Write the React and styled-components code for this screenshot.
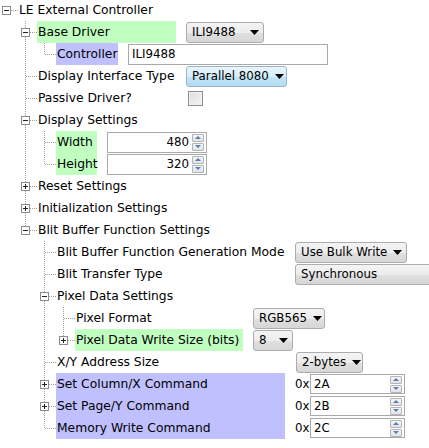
import React from 'react';
import styled, { createGlobalStyle } from 'styled-components';

const GREEN = '#c0ffc0';
const PURPLE = '#c0c0ff';

const GlobalStyle = createGlobalStyle`
  html, body {
    margin: 0;
    padding: 0;
    background: #fff;
  }
  body {
    font-family: "DejaVu Sans", Verdana, sans-serif;
    font-size: 12.3px;
    color: #000;
    overflow: hidden;
  }
`;

const Tree = styled.div`
  display: flex;
  flex-direction: column;
  width: 429px;
  height: 448px;
  margin-top: -1px;
  overflow: hidden;
`;

const Row = styled.div`
  display: flex;
  align-items: center;
  height: 22px;
  white-space: nowrap;
`;

const GuideSvg = styled.svg`
  flex: none;
  display: block;
  stroke: #a0a0a0;
  stroke-dasharray: 1 1;
  shape-rendering: crispEdges;
`;

const Label = styled.span`
  flex: none;
  box-sizing: border-box;
  width: ${p => (p.$w ? `${p.$w}px` : 'auto')};
  height: 22px;
  line-height: 22px;
  margin-left: -1px;
  padding: 0 1px;
  background: ${p => p.$bg || 'transparent'};
`;

const Value = styled.div`
  display: flex;
  align-items: center;
  font-size: 11.8px;
  margin-left: ${p => p.$gap || 10}px;
`;

const SelectBox = styled.div`
  flex: none;
  display: flex;
  align-items: center;
  justify-content: space-between;
  gap: 6px;
  box-sizing: border-box;
  width: ${p => p.$w}px;
  height: 21px;
  padding: 0 4px 0 5px;
  border: 1px solid ${p => (p.$hot ? '#9bb4c8' : '#acacac')};
  border-radius: 3px;
  overflow: hidden;
  background: ${p =>
    p.$hot
      ? 'linear-gradient(#e8f5fc, #d6eefb 50%, #c2e4f7 51%, #b2dcf3)'
      : 'linear-gradient(#f4f4f4, #ececec 50%, #e0e0e0 51%, #d6d6d6)'};

  svg {
    flex: none;
  }
`;

const Field = styled.div`
  flex: none;
  display: flex;
  align-items: center;
  box-sizing: border-box;
  width: ${p => p.$w}px;
  height: ${p => p.$h || 21}px;
  padding: 0 2px 0 3px;
  border: 1px solid #a9a9a9;
  background: #fff;
`;

const FieldText = styled.span`
  flex: 1;
  text-align: ${p => (p.$right ? 'right' : 'left')};
  padding-right: ${p => (p.$right ? 3 : 0)}px;
`;

const Spin = styled.div`
  flex: none;
  display: flex;
  flex-direction: column;
  gap: 1px;
`;

const SpinBtn = styled.div`
  display: flex;
  align-items: center;
  justify-content: center;
  box-sizing: border-box;
  width: 12px;
  height: 8px;
  border: 1px solid #b4b4b4;
  border-radius: 1px;
  background: linear-gradient(#f4f6f8, #dde3ea);
`;

const Check = styled.div`
  box-sizing: border-box;
  width: 15px;
  height: 15px;
  margin-left: 2px;
  border: 1px solid #8e8f8f;
  background: linear-gradient(135deg, #dcdcdc, #f6f6f6);
  box-shadow: inset 0 0 0 1px #f0f0f0;
`;

const Prefix = styled.span`
  flex: none;
  width: 15px;
`;

const Arrow = () => (
  <svg width="9" height="5" viewBox="0 0 9 5">
    <polygon points="0,0 9,0 4.5,5" fill="#000" />
  </svg>
);

const SpinButtons = () => (
  <Spin>
    <SpinBtn>
      <svg width="6" height="3" viewBox="0 0 6 3">
        <polygon points="0,3 6,3 3,0" fill="#5a7db5" />
      </svg>
    </SpinBtn>
    <SpinBtn>
      <svg width="6" height="3" viewBox="0 0 6 3">
        <polygon points="0,0 6,0 3,3" fill="#5a7db5" />
      </svg>
    </SpinBtn>
  </Spin>
);

const Control = ({ c }) => {
  if (c.type === 'select') {
    return (
      <SelectBox $w={c.w} $hot={c.hot}>
        <span>{c.value}</span>
        {c.arrow !== false && <Arrow />}
      </SelectBox>
    );
  }
  if (c.type === 'text') {
    return (
      <Field $w={c.w}>
        <FieldText>{c.value}</FieldText>
      </Field>
    );
  }
  if (c.type === 'number') {
    return (
      <Field $w={c.w}>
        <FieldText $right>{c.value}</FieldText>
        <SpinButtons />
      </Field>
    );
  }
  if (c.type === 'hex') {
    return (
      <>
        <Prefix>0x</Prefix>
        <Field $w={c.w} $h={20}>
          <FieldText>{c.value}</FieldText>
          <SpinButtons />
        </Field>
      </>
    );
  }
  if (c.type === 'check') return <Check />;
  return null;
};

const tree = {
  label: 'LE External Controller',
  open: true,
  children: [
    {
      label: 'Base Driver', bg: GREEN, col: 139, open: true,
      control: { type: 'select', value: 'ILI9488', w: 78 },
      children: [
        { label: 'Controller', bg: PURPLE, col: 62, control: { type: 'text', value: 'ILI9488', w: 200 } },
      ],
    },
    { label: 'Display Interface Type', col: 139, control: { type: 'select', value: 'Parallel 8080', w: 101, hot: true } },
    { label: 'Passive Driver?', col: 139, control: { type: 'check' } },
    {
      label: 'Display Settings', open: true,
      children: [
        { label: 'Width', bg: GREEN, col: 41, control: { type: 'number', value: '480', w: 100 } },
        { label: 'Height', bg: GREEN, col: 41, control: { type: 'number', value: '320', w: 100 } },
      ],
    },
    { label: 'Reset Settings', closed: true },
    { label: 'Initialization Settings', closed: true },
    {
      label: 'Blit Buffer Function Settings', open: true,
      children: [
        { label: 'Blit Buffer Function Generation Mode', col: 229, control: { type: 'select', value: 'Use Bulk Write', w: 112 } },
        { label: 'Blit Transfer Type', col: 229, control: { type: 'select', value: 'Synchronous', w: 150, arrow: false } },
        {
          label: 'Pixel Data Settings', open: true,
          children: [
            { label: 'Pixel Format', col: 168, control: { type: 'select', value: 'RGB565', w: 72 } },
            { label: 'Pixel Data Write Size (bits)', bg: GREEN, col: 168, closed: true, control: { type: 'select', value: '8', w: 40 } },
          ],
        },
        { label: 'X/Y Address Size', col: 229, gap: 11, control: { type: 'select', value: '2-bytes', w: 67 } },
        { label: 'Set Column/X Command', bg: PURPLE, col: 229, closed: true, control: { type: 'hex', value: '2A', w: 95 } },
        { label: 'Set Page/Y Command', bg: PURPLE, col: 229, closed: true, control: { type: 'hex', value: '2B', w: 95 } },
        { label: 'Memory Write Command', bg: PURPLE, col: 229, control: { type: 'hex', value: '2C', w: 95 } },
      ],
    },
  ],
};

const flatten = (node, level = 0, pipes = [], isLast = true, out = []) => {
  out.push({ ...node, level, pipes, isLast });
  if (node.open && node.children) {
    node.children.forEach((child, i) => {
      flatten(child, level + 1, [...pipes, !isLast], i === node.children.length - 1, out);
    });
  }
  return out;
};

const Pipe = () => (
  <GuideSvg width="19" height="22">
    <line x1="6.5" y1="0" x2="6.5" y2="22" />
  </GuideSvg>
);

const Joint = ({ root, last, expander }) => (
  <GuideSvg width="19" height="22">
    {!root && <line x1="6.5" y1="0" x2="6.5" y2={last ? 12 : 22} />}
    <line x1={expander ? 11 : 7} y1="11.5" x2="18" y2="11.5" />
    {expander && (
      <g style={{ strokeDasharray: 'none' }}>
        <rect x="2.5" y="7.5" width="8" height="8" fill="#fff" stroke="#8c8c8c" />
        <line x1="4" y1="11.5" x2="9" y2="11.5" stroke="#222" />
        {expander === 'plus' && <line x1="6.5" y1="9" x2="6.5" y2="14" stroke="#222" />}
      </g>
    )}
  </GuideSvg>
);

const rows = flatten(tree);

const App = () => (
  <>
    <GlobalStyle />
    <Tree>
      {rows.map(r => {
        const expander = r.open ? 'minus' : r.closed ? 'plus' : null;
        return (
          <Row key={r.label}>
            {r.pipes.map((p, i) => (p ? <Pipe key={i} /> : <GuideSvg key={i} width="19" height="22" />))}
            <Joint root={r.level === 0} last={r.isLast} expander={expander} />
            <Label $w={r.col} $bg={r.bg}>{r.label}</Label>
            {r.control && (
              <Value $gap={r.gap}>
                <Control c={r.control} />
              </Value>
            )}
          </Row>
        );
      })}
    </Tree>
  </>
);

export default App;
